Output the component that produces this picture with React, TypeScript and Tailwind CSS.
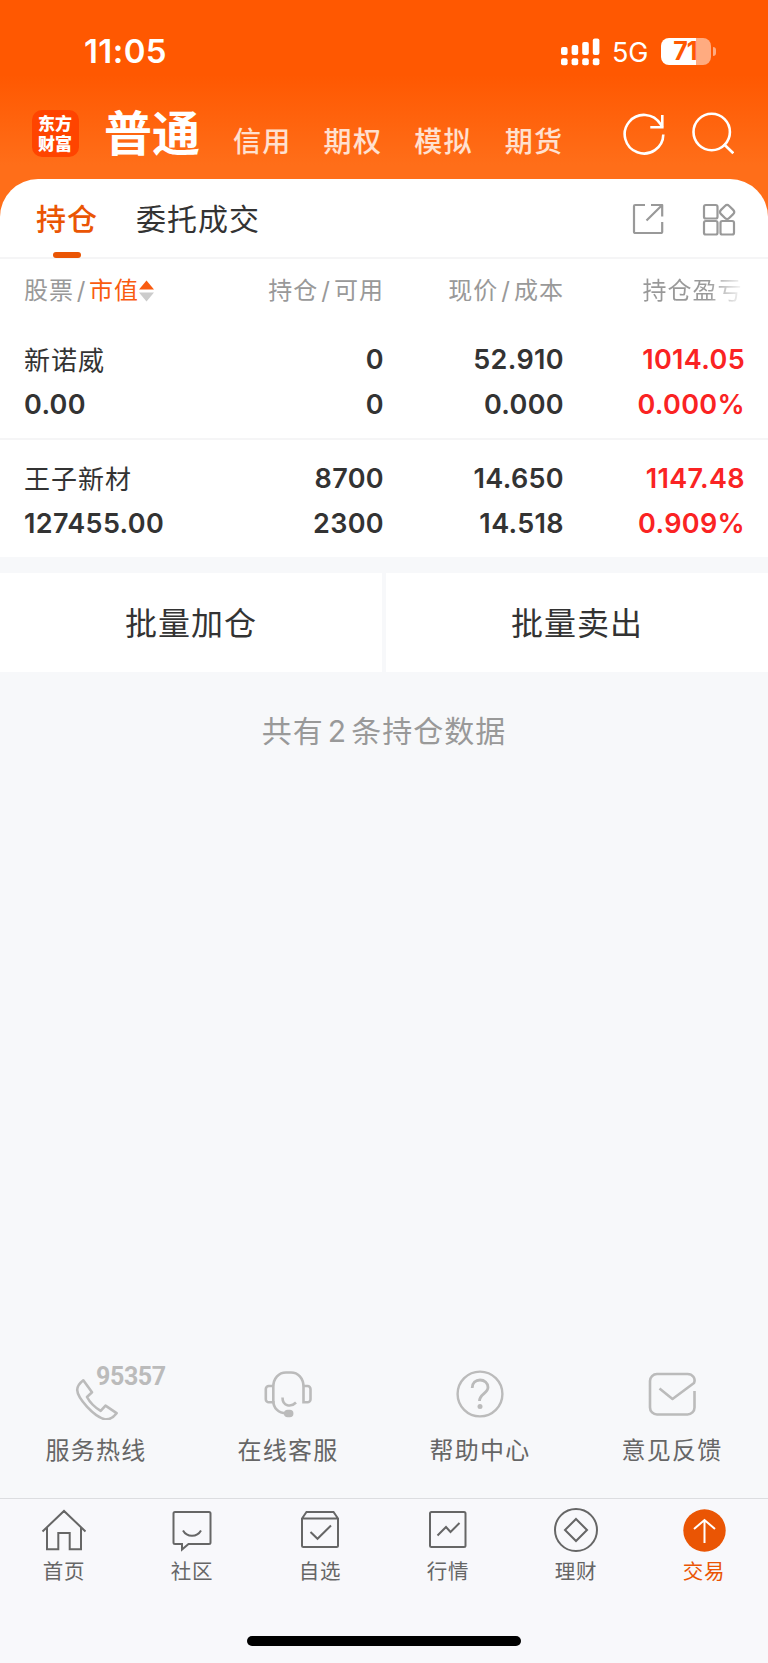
import type { ReactNode } from "react";

const products = ["信用", "期权", "模拟", "期货"];

const holdings = [
  {
    name: "新诺威",
    value: "0.00",
    amount: "0",
    available: "0",
    price: "52.910",
    cost: "0.000",
    profit: "1014.05",
    rate: "0.000%",
  },
  {
    name: "王子新材",
    value: "127455.00",
    amount: "8700",
    available: "2300",
    price: "14.650",
    cost: "14.518",
    profit: "1147.48",
    rate: "0.909%",
  },
];

function StatusBar() {
  return (
    <div className="flex h-[103px] items-center justify-between pl-[84px] pr-[52px] text-white">
      <span className="text-[33px] font-semibold leading-none tracking-[0.4px]">11:05</span>
      <div className="flex items-center">
        <svg width="39" height="28" viewBox="0 0 39 28" fill="currentColor">
          <rect x="0" y="9" width="6.6" height="8" rx="2" />
          <rect x="10.6" y="7" width="6.6" height="10" rx="2" />
          <rect x="21.2" y="4" width="6.6" height="13" rx="2" />
          <rect x="31.8" y="0.5" width="6.6" height="16.5" rx="2" />
          <rect x="0" y="20.3" width="6.6" height="7" rx="2" />
          <rect x="10.6" y="20.3" width="6.6" height="7" rx="2" />
          <rect x="21.2" y="20.3" width="6.6" height="7" rx="2" />
          <rect x="31.8" y="20.3" width="6.6" height="7" rx="2" />
        </svg>
        <span className="ml-[12px] w-[37px] pt-px text-[27px] leading-none tracking-[-0.2px]">5G</span>
        <div className="ml-[12px] flex h-[27px] w-[50px] items-center justify-center rounded-[8px] bg-[linear-gradient(90deg,#fff_70%,#ffab80_70%)]">
          <span className="pr-[2px] text-[25px] font-bold leading-none tracking-[-1px] text-[#ff5801]">
            71
          </span>
        </div>
        <div className="ml-[2px] h-[9px] w-[3px] rounded-r-full bg-[#ffab80]" />
      </div>
    </div>
  );
}

function Header() {
  return (
    <div className="flex h-[76px] pl-[32px] pr-[34px] text-white">
      <div className="mt-[7px] flex size-[47px] shrink-0 flex-col items-center justify-center rounded-[10px] bg-[#ff4400] pr-px text-[17px] font-black leading-[20px]">
        <span>东方</span>
        <span>财富</span>
      </div>
      <h1 className="ml-[25px] mt-[1px] w-[97px] text-[48px] font-bold leading-[60px]">普通</h1>
      <nav className="ml-[32px] mt-[22px] flex gap-[32px] text-[28px] font-medium leading-[34px] tracking-[1.3px] text-white/80">
        {products.map((product) => (
          <span key={product} className="w-[58.6px] whitespace-nowrap">
            {product}
          </span>
        ))}
      </nav>
      <div className="ml-auto mt-[9px] flex gap-[24px]">
        <svg width="44" height="44" viewBox="0 0 44 44" fill="none" stroke="currentColor" strokeWidth="2.6">
          <path d="M41.300 22.500A19.300 19.300 0 1 1 38.500 12.200L40.300 15.300" />
          <path d="M40.300 3v12.300H28.300" />
        </svg>
        <svg width="44" height="44" viewBox="0 0 44 44" fill="none" stroke="currentColor" strokeWidth="2.6">
          <circle cx="21.700" cy="20" r="18.200" />
          <path d="M33.700 32l9.600 9.200" />
        </svg>
      </div>
    </div>
  );
}

function Tabs() {
  return (
    <div className="flex h-[80px] border-b-2 border-[#f5f5f6] pl-[36px] pr-[32px] text-[30px] leading-[80px] tracking-[1px]">
      <div className="flex h-[79px] w-[62px] flex-col items-center font-medium text-[#ea5504]">
        <span className="h-[73px] whitespace-nowrap">持仓</span>
        <span className="h-[6px] w-[28px] shrink-0 rounded-[3px] bg-[#ea5504]" />
      </div>
      <span className="ml-[38px] text-[#333333]">委托成交</span>
      <div className="ml-auto mt-[24px] flex gap-[36px] text-[#999999]">
        <svg width="34" height="34" viewBox="0 0 34 34" fill="none" stroke="currentColor" strokeWidth="2.200" strokeLinejoin="round">
          <path d="M13 2H3.200A1.200 1.200 0 0 0 2 3.200v25.600A1.200 1.200 0 0 0 3.200 30h25.800a1.200 1.200 0 0 0 1.200-1.200V19" />
          <path d="M19 2h11.200v11.500M29.700 2.500L14.500 17.500" />
        </svg>
        <svg width="34" height="34" viewBox="0 0 34 34" fill="none" stroke="currentColor" strokeWidth="2.200">
          <rect x="2" y="2" width="13.500" height="13.500" rx="1.800" />
          <rect x="2" y="18" width="13.500" height="13.500" rx="1.800" />
          <rect x="18.500" y="18" width="13.500" height="13.500" rx="1.800" />
          <rect x="19.300" y="3.200" width="11.600" height="11.600" rx="3" transform="rotate(45 25.100 9)" />
        </svg>
      </div>
    </div>
  );
}

function HoldingsTable() {
  return (
    <div className="text-[#333333]">
      <div className="grid h-[68px] grid-cols-[179px_181px_180px_180px] px-[24px] text-right text-[24px] leading-[64px] tracking-[1px] text-[#999999]">
        <div className="flex h-[64px] items-center whitespace-nowrap">
          <span>股票</span>
          <span className="w-[15px] text-center">/</span>
          <span className="text-[#f95b10]">市值</span>
          <svg width="15" height="22" viewBox="0 0 15 22">
            <path d="M7.500 0.500L15 9.500H0z" fill="#f95b10" />
            <path d="M7.500 21.500L15 12.500H0z" fill="#cccccc" />
          </svg>
        </div>
        <span>
          持仓<span className="mx-[3px]">/</span>可用
        </span>
        <span>
          现价<span className="mx-[3px]">/</span>成本
        </span>
        <span className="bg-gradient-to-r from-[#999999] from-80% to-[#99999920] to-98% bg-clip-text pr-[1.500px] text-transparent">
          持仓盈亏
        </span>
      </div>
      {holdings.map((row) => (
        <div
          key={row.name}
          className="grid h-[118px] grid-cols-[179px_181px_180px_180px] grid-rows-[44.500px_44.500px] border-[#f5f5f6] px-[24px] pt-[19px] text-right text-[27px] font-semibold leading-[40px] tracking-[0.35px] not-last:h-[113px] not-last:border-b-2 not-last:pt-[13px]"
        >
          <span className="pt-px text-left text-[26px] font-normal tracking-[1px]">{row.name}</span>
          <span>{row.amount}</span>
          <span>{row.price}</span>
          <span className="-mr-px text-[#fa2323]">{row.profit}</span>
          <span className="text-left">{row.value}</span>
          <span>{row.available}</span>
          <span>{row.cost}</span>
          <span className="-mr-px text-[#fa2323]">{row.rate}</span>
        </div>
      ))}
    </div>
  );
}

function ServiceItem({ label, children }: { label: string; children: ReactNode }) {
  return (
    <div className="flex flex-1 flex-col items-center">
      {children}
      <span className="mt-[11px] text-[24px] leading-[40px] tracking-[1.2px] text-[#666666]">{label}</span>
    </div>
  );
}

function Services() {
  return (
    <div className="flex h-[132px] text-[#bbbbbb]">
      <ServiceItem label="服务热线">
        <div className="relative h-[54px] w-[48px]">
          <svg width="48" height="54" viewBox="0 0 48 56" preserveAspectRatio="xMinYMin slice" fill="none" stroke="currentColor" strokeWidth="2.600" strokeLinejoin="round">
            <path d="M11.300 14.300L20 26.300L15 31Q19.500 39.500 28.700 44.800L33.500 39.700L44.600 47.200Q39.500 53.800 33.500 53.400C22 51 5.500 32 5.200 24Q5.200 19 11.300 14.300Z" />
          </svg>
          <span className="absolute left-[24px] top-[1px] font-[Roboto] text-[25px] font-bold leading-[20px] tracking-[-0.4px]">
            95357
          </span>
        </div>
      </ServiceItem>
      <ServiceItem label="在线客服">
        <svg width="48" height="54" viewBox="0 0 48 54" fill="none" stroke="currentColor" strokeWidth="2.600">
          <path d="M9.300 20H4.800a3 3 0 0 0-3 3V33.300a3 3 0 0 0 3 3H9.300V21C9.300 12 15 6.500 22 6.500h5c7 0 12.500 5.500 12.500 14.500V36.300h4a3 3 0 0 0 3-3V23a3 3 0 0 0-3-3H39.500" />
          <path d="M9.300 35c0 7 5 12 13 12.500" />
          <path d="M18.500 31.500c0 9 8.500 10 13.500 5" />
          <rect x="20.700" y="44.500" width="8" height="6" rx="3" fill="currentColor" strokeWidth="1.500" />
        </svg>
      </ServiceItem>
      <ServiceItem label="帮助中心">
        <svg width="48" height="54" viewBox="0 0 48 54" fill="none" stroke="currentColor" strokeWidth="2.400">
          <circle cx="24" cy="28" r="22.400" />
          <path d="M16.200 22c0-5 3.500-8 7.800-8s8 2.800 8 7.300c0 6.200-8.500 6.700-8.500 13.700" strokeWidth="2.800" />
          <circle cx="24" cy="40.500" r="2.500" fill="currentColor" stroke="none" />
        </svg>
      </ServiceItem>
      <ServiceItem label="意见反馈">
        <svg width="48" height="54" viewBox="0 0 48 54" fill="none" stroke="currentColor" strokeWidth="2.600" strokeLinejoin="round">
          <path d="M46.500 25v16.500a7 7 0 0 1-7 7H9a7 7 0 0 1-7-7V15a7 7 0 0 1 7-7h30.500c5 0 8.500 4.500 6.500 9L24.500 33 11.500 22.500" />
        </svg>
      </ServiceItem>
    </div>
  );
}

function NavItem({ label, active, children }: { label: string; active?: boolean; children: ReactNode }) {
  return (
    <div className={`flex flex-1 flex-col items-center pt-[8px] ${active ? "text-[#ea5504]" : "text-[#666666]"}`}>
      <svg width="46" height="46" viewBox="0 0 46 46" fill="none" stroke="currentColor" strokeWidth="2">
        {children}
      </svg>
      <span className="mt-px text-[20.500px] leading-[36px] tracking-[0.8px]">{label}</span>
    </div>
  );
}

function BottomNav() {
  return (
    <div className="flex h-[138px] border-t border-[#dcdde0] bg-[#f8f8fb]">
      <NavItem label="首页">
        <path d="M1.500 24.500L23 4l21.500 20.500M6 20.500v21.800h11.300V26h11.400v16.300H40V20.500" />
      </NavItem>
      <NavItem label="社区">
        <path d="M6 5h34a1.500 1.500 0 0 1 1.500 1.500v29a1.500 1.500 0 0 1-1.500 1.500H19.500L13 42.500V37H6a1.500 1.500 0 0 1-1.500-1.500V6.500A1.500 1.500 0 0 1 6 5z" />
        <path d="M14 23.500c4 7 14 7 18 0" />
      </NavItem>
      <NavItem label="自选">
        <path d="M5 11.500L9.500 5h27l4.500 6.500V38.500a1.500 1.500 0 0 1-1.500 1.500h-33A1.500 1.500 0 0 1 5 38.500zM5 11.500h36M13.500 25l7 6.800L34 18.500" />
      </NavItem>
      <NavItem label="行情">
        <rect x="5" y="5" width="35.500" height="35" rx="1.500" />
        <path d="M12.500 28.500l8.500-8.500 4.500 5L34.500 16" />
      </NavItem>
      <NavItem label="理财">
        <circle cx="23" cy="23" r="21" />
        <path d="M23 12L34 23 23 34 12 23z" />
      </NavItem>
      <NavItem label="交易" active>
        <circle cx="23.500" cy="23.500" r="21.200" fill="currentColor" stroke="none" />
        <path d="M23.500 36V13M13 22l10.500-9L34 22" stroke="#fff" />
      </NavItem>
    </div>
  );
}

export default function App() {
  return (
    <div className="flex h-[1663px] w-[768px] flex-col overflow-hidden bg-[#f7f8fa] font-[Inter,'Noto_Sans_CJK_SC',sans-serif]">
      <div className="bg-[linear-gradient(180deg,#ff5801_75px,#ff6e19_165px)]">
        <StatusBar />
        <Header />
        <div className="h-[378px] rounded-t-[38px] bg-white">
          <Tabs />
          <HoldingsTable />
        </div>
      </div>
      <div className="mt-[16px] flex h-[99px] gap-[4px] text-[32px] leading-[102px] tracking-[1px] text-[#333333]">
        <button className="flex-1 bg-white">批量加仓</button>
        <button className="flex-1 bg-white">批量卖出</button>
      </div>
      <p className="mt-[39px] text-center text-[30px] leading-[40px] tracking-[1px] text-[#999999]">
        共有<span className="mx-[4px]">2</span>条持仓数据
      </p>
      <div className="mt-auto">
        <Services />
        <BottomNav />
        <div className="h-[27px] bg-[#f8f8fb]">
          <div className="mx-auto h-[10px] w-[274px] rounded-full bg-black" />
        </div>
      </div>
    </div>
  );
}
